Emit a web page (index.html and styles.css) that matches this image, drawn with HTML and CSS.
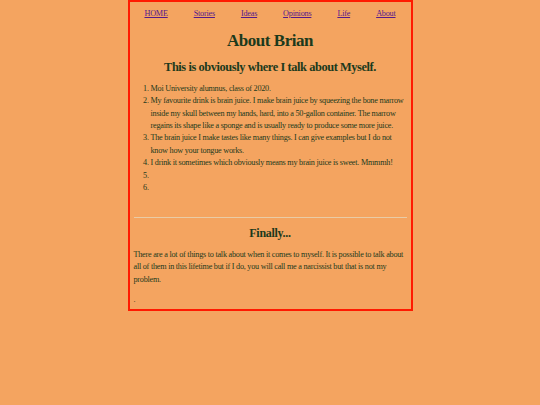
FILE: index.html
```html
<!DOCTYPE html>
<html>
<head>
<meta charset="utf-8">
<link rel="stylesheet" href="styles.css">
</head>
<body>
<div class="page">
  <nav class="nav">
    <a href="#">HOME</a>
    <a href="#">Stories</a>
    <a href="#">Ideas</a>
    <a href="#">Opinions</a>
    <a href="#">Life</a>
    <a href="#">About</a>
  </nav>
  <h1 class="title">About Brian</h1>
  <h2 class="subtitle">This is obviously where I talk about Myself.</h2>
  <ol class="facts">
    <li>Moi University alumnus, class of 2020.</li>
    <li>My favourite drink is brain juice. I make brain juice by squeezing the bone marrow inside my skull between my hands, hard, into a 50-gallon container. The marrow regains its shape like a sponge and is usually ready to produce some more juice.</li>
    <li>The brain juice I make tastes like many things. I can give examples but I do not know how your tongue works.</li>
    <li>I drink it sometimes which obviously means my brain juice is sweet. Mmmmh!</li>
    <li></li>
    <li></li>
  </ol>
  <hr class="rule">
  <h2 class="finally">Finally...</h2>
  <p class="text">There are a lot of things to talk about when it comes to myself. It is possible to talk about all of them in this lifetime but if I do, you will call me a narcissist but that is not my problem.</p>
  <p class="dot">.</p>
</div>
</body>
</html>
```

FILE: styles.css
```css
html, body {
  margin: 0;
  padding: 0;
  background: #f4a460;
}
body {
  font-family: "Liberation Serif", "Times New Roman", serif;
  color: #1c3a1c;
}
.page {
  box-sizing: border-box;
  width: 285px;
  margin: 0 auto;
  border: 2px solid #ff1a00;
  padding: 0 4px 3px;
}
.nav {
  display: flex;
  justify-content: center;
  gap: 26px;
  margin-top: 6px;
  font-size: 8.2px;
  letter-spacing: -0.22px;
  line-height: 12px;
}
.nav a {
  color: #551a8b;
}
.title {
  margin: 11px 0 0;
  text-align: center;
  font-size: 17px;
  letter-spacing: -0.45px;
  line-height: 20px;
  font-weight: bold;
}
.subtitle {
  margin: 8px 0 0;
  text-align: center;
  font-size: 12.4px;
  letter-spacing: -0.42px;
  line-height: 16px;
  font-weight: bold;
}
.facts {
  margin: 7.8px 0 0;
  padding-left: 17px;
  font-size: 8.2px;
  letter-spacing: -0.24px;
  line-height: 12.4px;
}
.facts li {
  min-height: 12.4px;
}
.rule {
  margin: 22.6px 0 0;
  border: 0;
  border-top: 1px solid #e9cba6;
  height: 0;
}
.finally {
  margin: 7px 0 0;
  text-align: center;
  font-size: 12px;
  letter-spacing: -0.3px;
  line-height: 16px;
  font-weight: bold;
}
.text {
  margin: 7.7px 0 0;
  font-size: 8.2px;
  letter-spacing: -0.24px;
  line-height: 12.6px;
}
.dot {
  margin: 7.2px 0 0;
  font-size: 8.2px;
  line-height: 12.6px;
}
```
